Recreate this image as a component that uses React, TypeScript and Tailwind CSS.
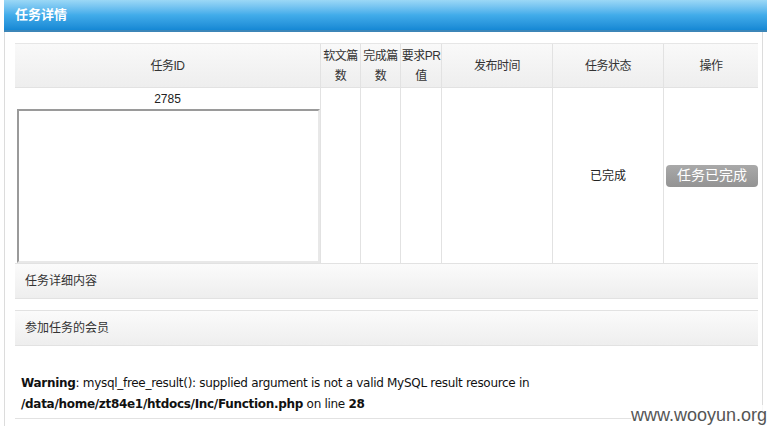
import React from "react";

const cjk = "font-['Liberation_Sans','Noto_Sans_CJK_SC',sans-serif]";

const cols = [
  { w: "w-[305px]", label: ["任务ID"] },
  { w: "w-[40px]", label: ["软文篇", "数"] },
  { w: "w-[40px]", label: ["完成篇", "数"] },
  { w: "w-[41px]", label: ["要求PR", "值"] },
  { w: "w-[111px]", label: ["发布时间"] },
  { w: "w-[111px]", label: ["任务状态"] },
  { w: "w-[95px]", label: ["操作"] },
];

const SectionBar = ({ title }: { title: string }) => (
  <div className="h-[35px] flex items-center pl-[10px] text-[12px] text-[#333] bg-gradient-to-b from-[#fbfbfb] to-[#eeeeee] border-t border-[#e2e2e2]">
    {title}
  </div>
);

export default function App() {
  return (
    <div className={`w-[767px] h-[426px] bg-white relative overflow-hidden ${cjk}`}>
      <div className="ml-[4px] h-[32px] bg-gradient-to-b from-[#9bd8f6] via-[#41acea] to-[#1588d4] border-b-2 border-[#3c86b8] flex items-center pl-[11px]">
        <span className="text-white font-bold text-[13px]">任务详情</span>
      </div>

      <div className="ml-[4px] w-[759px] h-[394px] border-l border-r border-[#dcdcdc] pt-[11px] pl-[10px]">
        <div className="w-[743px] border-b border-[#e2e2e2]">
          <div className="flex h-[44px] border-t border-[#e6e6e6] bg-gradient-to-b from-[#f9f9f9] to-[#eeeeee]">
            {cols.map((c, i) => (
              <div
                key={i}
                className={`${c.w} ${i > 0 ? "border-l border-[#e2e2e2]" : ""} flex flex-col items-center justify-center text-[12px] leading-[20px] text-[#333] whitespace-nowrap tracking-[-0.5px]`}
              >
                {c.label.map((l) => (
                  <span key={l}>{l}</span>
                ))}
              </div>
            ))}
          </div>

          <div className="flex h-[176px] border-t border-[#e2e2e2]">
            <div className="w-[305px] flex flex-col">
              <div className="h-[21px] flex items-center justify-center text-[12px] text-[#222]">2785</div>
              <div className="ml-[2px] w-[303px] h-[154px] border-2 border-t-[#9a9a9a] border-l-[#9a9a9a] border-r-[#e8e8e8] border-b-[#e8e8e8] bg-white" />
            </div>
            <div className="w-[40px] border-l border-[#e2e2e2]" />
            <div className="w-[40px] border-l border-[#e2e2e2]" />
            <div className="w-[41px] border-l border-[#e2e2e2]" />
            <div className="w-[111px] border-l border-[#e2e2e2]" />
            <div className="w-[111px] border-l border-[#e2e2e2] flex items-center justify-center text-[12px] text-[#222]">
              已完成
            </div>
            <div className="w-[95px] border-l border-[#e2e2e2] flex items-center pl-[2px]">
              <div className="w-[94px] h-[22px] rounded-[4px] bg-gradient-to-b from-[#a9a9a9] to-[#939393] text-white text-[14px] flex items-center justify-center">
                任务已完成
              </div>
            </div>
          </div>

          <SectionBar title="任务详细内容" />
          <div className="h-[12px] border-t border-[#e2e2e2]" />
          <SectionBar title="参加任务的会员" />
          <div className="h-[73px] border-t border-[#e2e2e2] pl-[6px] pt-[27px] text-[12px] leading-[21px] text-[#111] font-['DejaVu_Sans','Noto_Sans_CJK_SC',sans-serif] tracking-[-0.3px]">
            <div>
              <b>Warning</b>: mysql_free_result(): supplied argument is not a valid MySQL result resource in
            </div>
            <div>
              <b>/data/home/zt84e1/htdocs/Inc/Function.php</b> on line <b>28</b>
            </div>
          </div>
        </div>
      </div>

      <div className="absolute right-[0px] bottom-[0px] text-[18px] leading-[21px] text-[#555] font-['Liberation_Sans',sans-serif] bg-white/80">
        www.wooyun.org
      </div>
    </div>
  );
}
